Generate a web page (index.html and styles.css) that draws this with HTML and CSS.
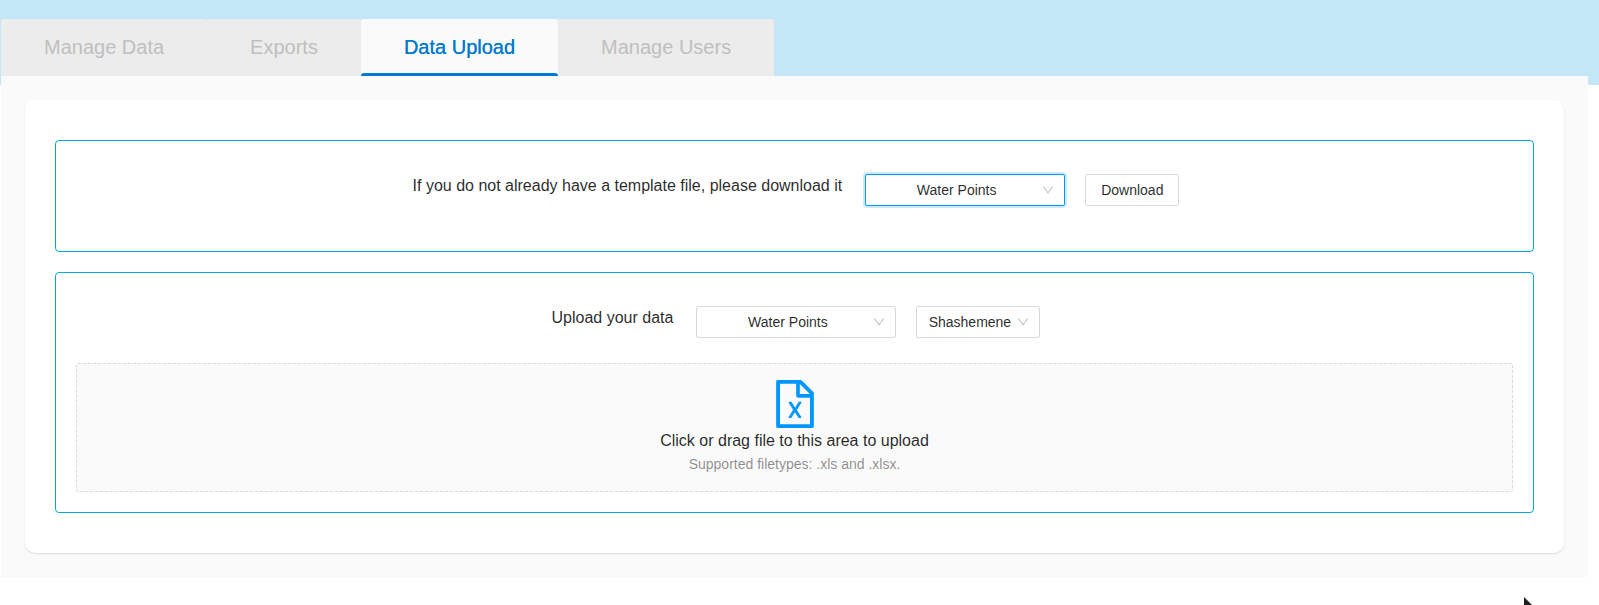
FILE: index.html
```html
<!DOCTYPE html>
<html lang="en">
<head>
<meta charset="utf-8">
<title>Data Upload</title>
<link rel="stylesheet" href="styles.css">
</head>
<body>
<div class="page">
  <nav class="tabs" role="tablist">
    <button class="tab" role="tab" type="button">Manage Data</button>
    <button class="tab" role="tab" type="button">Exports</button>
    <button class="tab tab-active" role="tab" type="button" aria-selected="true">Data Upload</button>
    <button class="tab" role="tab" type="button">Manage Users</button>
  </nav>
  <main class="content">
    <div class="card">
      <section class="box">
        <div class="row">
          <label class="row-label" for="template">If you do not already have a template file, please download it</label>
          <div class="select-wrap select-wide select-focused">
            <select id="template"><option>Water Points</option></select>
            <svg class="arrow" viewBox="64 64 896 896"><path d="M884 256h-75c-5.100 0-9.900 2.500-12.900 6.600L512 654.200 227.900 262.600c-3-4.100-7.800-6.600-12.900-6.600h-75c-6.500 0-10.300 7.400-6.500 12.700l352.600 486.100c12.800 17.600 39 17.600 51.700 0l352.600-486.100c3.900-5.300.1-12.700-6.400-12.700z"/></svg>
          </div>
          <button class="button" type="button">Download</button>
        </div>
      </section>
      <section class="box box-upload">
        <div class="row">
          <label class="row-label" for="kind">Upload your data</label>
          <div class="select-wrap select-wide">
            <select id="kind"><option>Water Points</option></select>
            <svg class="arrow" viewBox="64 64 896 896"><path d="M884 256h-75c-5.100 0-9.900 2.500-12.900 6.600L512 654.200 227.900 262.600c-3-4.100-7.800-6.600-12.900-6.600h-75c-6.500 0-10.300 7.400-6.500 12.700l352.600 486.100c12.800 17.600 39 17.600 51.700 0l352.600-486.100c3.900-5.300.1-12.700-6.400-12.700z"/></svg>
          </div>
          <div class="select-wrap">
            <select aria-label="Town"><option>Shashemene</option></select>
            <svg class="arrow" viewBox="64 64 896 896"><path d="M884 256h-75c-5.100 0-9.900 2.500-12.900 6.600L512 654.200 227.900 262.600c-3-4.100-7.800-6.600-12.900-6.600h-75c-6.500 0-10.300 7.400-6.500 12.700l352.600 486.100c12.800 17.600 39 17.600 51.700 0l352.600-486.100c3.900-5.300.1-12.700-6.400-12.700z"/></svg>
          </div>
        </div>
        <button class="drop" type="button">
          <svg class="drop-icon" viewBox="64 64 896 896"><path d="M854.600 288.600L639.400 73.400c-6-6-14.100-9.400-22.600-9.400H192c-17.700 0-32 14.300-32 32v832c0 17.700 14.300 32 32 32h640c17.700 0 32-14.300 32-32V311.300c0-8.500-3.400-16.700-9.400-22.700zM790.200 326H602V137.800L790.200 326zm1.800 562H232V136h302v216a42 42 0 0042 42h216v494zM514.100 580.100l-61.800-102.400c-2.200-3.600-6.100-5.800-10.300-5.800h-38.400c-2.300 0-4.500.6-6.400 1.900-5.600 3.500-7.300 10.900-3.700 16.600l82.300 130.400-83.400 132.800a12.040 12.040 0 0010.200 18.400h34.500c4.200 0 8-2.200 10.200-5.700L510 664.800l62.300 101.400c2.200 3.600 6.100 5.700 10.200 5.700H620c2.300 0 4.500-.7 6.500-1.900 5.600-3.600 7.200-11 3.600-16.600l-84-130.400 85.300-132.500a12.040 12.040 0 00-10.100-18.500h-35.700c-4.200 0-8.100 2.200-10.300 5.800l-61.200 102.300z"/></svg>
          <span class="drop-title">Click or drag file to this area to upload</span>
          <span class="drop-hint">Supported filetypes: .xls and .xlsx.</span>
        </button>
      </section>
    </div>
  </main>
  <svg class="pointer" viewBox="0 0 14 20"><path d="M1 1v17l4-4 3 6 2-1-3-6h6z"/></svg>
</div>
</body>
</html>
```
FILE: styles.css
```css
* { box-sizing: border-box; }

body {
  margin: 0;
  background: #fff;
  color: rgba(0, 0, 0, 0.85);
  font: 14px/22px "Liberation Sans", Arial, sans-serif;
}

button, select { font: inherit; color: inherit; }

.page {
  position: relative;
  min-height: 100vh;
  overflow: hidden;
  padding: 19px 11px 28px 1px;
  background: linear-gradient(#c3e7f6, #c3e7f6) 0 0 / 100% 85px no-repeat;
}

.tabs { display: flex; height: 57px; }

.tab {
  padding: 0 43px 2px;
  border: 0;
  border-radius: 2px 2px 0 0;
  background: #ececec;
  color: #bfbfbf;
  font-size: 20px;
}

.tab-active {
  position: relative;
  background: #fafafa;
  color: #007acf;
  text-shadow: 0 0 0 currentColor;
}

.tab-active::after {
  content: "";
  position: absolute;
  inset: auto 0 0;
  height: 3px;
  border-radius: 3px 3px 0 0;
  background: #007acf;
}

.content { padding: 24px; background: #fafafa; }

.card {
  display: flex;
  flex-direction: column;
  gap: 20px;
  padding: 40px 30px;
  border-radius: 10px;
  background: #fff;
  box-shadow: 0 1px 2px rgba(0, 0, 0, 0.12);
}

.box {
  padding: 33px 20px 45px;
  border: 1px solid #00a9d9;
  border-radius: 4px;
}

.box-upload { padding-bottom: 20px; }

.row {
  display: flex;
  justify-content: center;
  align-items: flex-start;
  gap: 20px;
}

.row-label { padding: 0 3px; font-size: 16px; line-height: 24px; }

.select-wrap { position: relative; }

.select-wrap select {
  display: block;
  appearance: none;
  width: 100%;
  height: 32px;
  padding: 0 28px 0 11px;
  border: 1px solid #d9d9d9;
  border-radius: 2px;
  background: #fff;
  text-align-last: center;
  outline: none;
}

.select-wide { width: 200px; }

.select-focused select {
  border-color: #0098ff;
  box-shadow: 0 0 0 2px rgba(0, 152, 255, 0.2);
}

.arrow {
  position: absolute;
  top: 10px;
  right: 11px;
  width: 12px;
  height: 12px;
  fill: #bfbfbf;
  pointer-events: none;
}

.button {
  height: 32px;
  padding: 0 15px;
  border: 1px solid #d9d9d9;
  border-radius: 2px;
  background: #fff;
}

.drop {
  display: flex;
  flex-direction: column;
  align-items: center;
  width: 100%;
  margin-top: 25px;
  padding: 16px 0;
  border: 1px dashed #d9d9d9;
  border-radius: 2px;
  background: #fafafa;
}

.drop-icon { width: 48px; height: 48px; fill: #0098ff; }

.drop-title { font-size: 16px; line-height: 25px; }

.drop-hint { color: rgba(0, 0, 0, 0.45); }

.pointer {
  position: absolute;
  top: 596px;
  right: 62px;
  width: 14px;
  height: 20px;
  fill: #222;
}
```
